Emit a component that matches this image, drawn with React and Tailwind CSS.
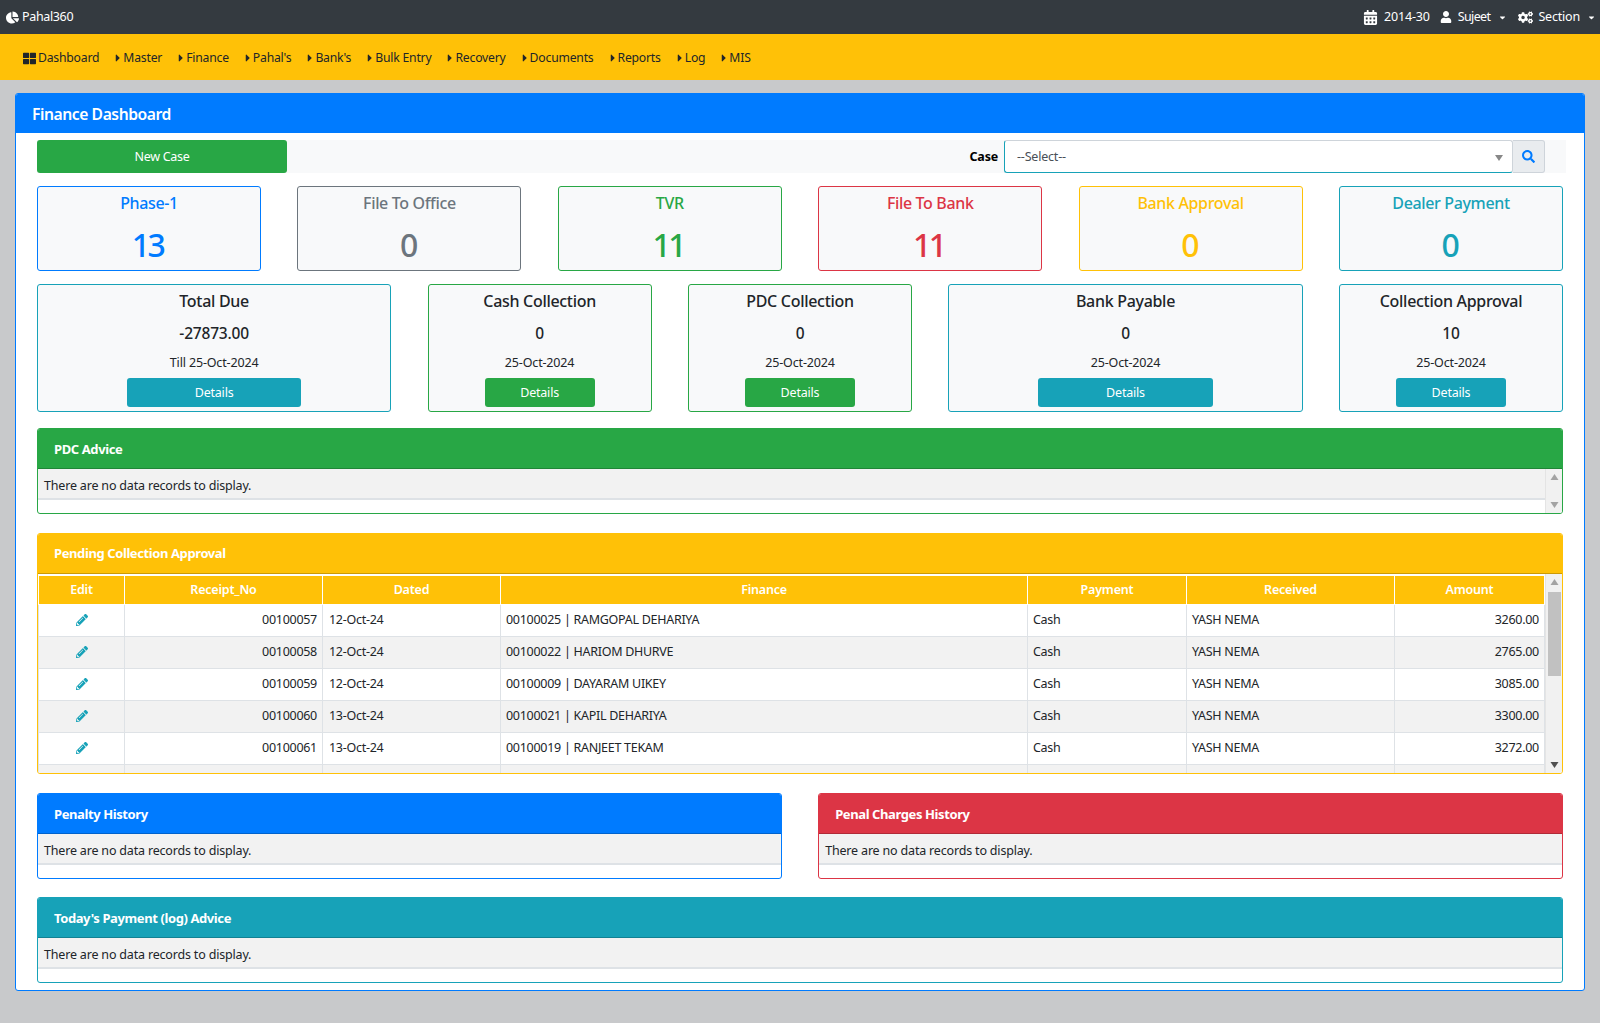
import React from "react";
import {
  FaCalendarAlt,
  FaCaretDown,
  FaCaretRight,
  FaChartPie,
  FaCogs,
  FaPencilAlt,
  FaSearch,
  FaThLarge,
  FaUser,
} from "react-icons/fa";

const menu = ["Master", "Finance", "Pahal's", "Bank's", "Bulk Entry", "Recovery", "Documents", "Reports", "Log", "MIS"];

const rows = [
  ["00100057", "12-Oct-24", "00100025 | RAMGOPAL DEHARIYA", "3260.00"],
  ["00100058", "12-Oct-24", "00100022 | HARIOM DHURVE", "2765.00"],
  ["00100059", "12-Oct-24", "00100009 | DAYARAM UIKEY", "3085.00"],
  ["00100060", "13-Oct-24", "00100021 | KAPIL DEHARIYA", "3300.00"],
  ["00100061", "13-Oct-24", "00100019 | RANJEET TEKAM", "3272.00"],
];

const Tile = ({ title, value, border, text }) => (
  <div className={`h-[85px] rounded-[3px] border bg-[#f8f9fa] text-center ${border} ${text}`}>
    <div className="mt-[5px] text-[16px] leading-[22px] font-medium tracking-[-0.35px]">{title}</div>
    <div className="mt-[11px] pr-[3px] text-[32px] leading-[40px] font-medium tracking-[-2.5px]">{value}</div>
  </div>
);

const Stat = ({ title, value, date, span, border, button }) => (
  <div className={`h-[128px] rounded-[3px] border bg-[#f8f9fa] text-center text-[#212529] ${span} ${border}`}>
    <div className="mt-[5px] text-[16px] leading-[22px] font-medium tracking-[-0.3px]">{title}</div>
    <div className="mt-[10px] text-[15.5px] leading-[22px] font-medium tracking-[-0.2px]">{value}</div>
    <div className="mt-[10px] text-[12.5px] leading-[18px] tracking-[-0.15px]">{date}</div>
    <button className={`mx-auto mt-[6px] block h-[29px] w-[49.5%] rounded-[3px] pt-[1px] text-[12.5px] tracking-[-0.2px] text-white ${button}`}>Details</button>
  </div>
);

const Arrow = ({ up, dark }) => (
  <svg width="17" height="18" viewBox="0 0 17 18" className="shrink-0">
    <polygon points={up ? "8.5,5 12.5,11 4.5,11" : "4.5,7 12.5,7 8.5,13"} fill={dark ? "#505050" : "#a3a3a3"} />
  </svg>
);

const EmptyCard = ({ title, header, border, scroll, className = "" }) => (
  <div className={`overflow-hidden rounded-[3px] border ${border} ${className}`}>
    <div className={`flex h-[40px] items-center border-b border-black/20 pl-[16px] pt-[2px] text-[13px] font-bold tracking-[-0.4px] text-white ${header}`}>{title}</div>
    <div className="flex h-[44px]">
      <div className="flex-1">
        <div className="flex h-[31px] items-center border-b-2 border-[#dee2e6] bg-[#f2f2f2] pl-[6px] pt-[6px] text-[12.5px] tracking-[-0.18px] text-[#212529]">
          There are no data records to display.
        </div>
      </div>
      {scroll && (
        <div className="flex w-[17px] flex-col justify-between border-l border-[#e4e4e4] bg-[#f1f1f1]">
          <Arrow up />
          <Arrow />
        </div>
      )}
    </div>
  </div>
);

const App = () => {
  return (
    <div className="min-h-[1023px] bg-[#c8c9cb] font-['Noto_Sans',sans-serif] text-[12.5px] tracking-[-0.2px] text-[#212529]">
      <div className="flex h-[34px] items-center justify-between bg-[#343a40] pl-[6px] pr-[4px] text-white">
        <div className="flex items-center gap-[3px]">
          <FaChartPie className="text-[13px]" />
          <span className="tracking-[-0.35px]">Pahal360</span>
        </div>
        <div className="flex items-center">
          <FaCalendarAlt className="text-[15px]" />
          <span className="ml-[6px]">2014-30</span>
          <FaUser className="ml-[10px] text-[12px]" />
          <span className="ml-[6px] tracking-[-0.6px]">Sujeet</span>
          <FaCaretDown className="ml-[8px] text-[9px]" />
          <FaCogs className="ml-[11px] text-[15px]" />
          <span className="ml-[5px]">Section</span>
          <FaCaretDown className="ml-[7px] text-[9px]" />
        </div>
      </div>

      <div className="flex h-[46px] items-center bg-[#ffc107] pl-[23px] pt-[2px] text-[12.2px] tracking-[-0.2px]">
        <FaThLarge className="text-[13px]" />
        <span className="ml-[2px]">Dashboard</span>
        {menu.map((item) => (
          <div key={item} className="ml-[16px] flex items-center">
            <FaCaretRight className="h-[12px] w-[6px]" />
            <span className="ml-[2px]">{item}</span>
          </div>
        ))}
      </div>

      <div className="px-[15px] pt-[13px]">
        <div className="h-[898px] overflow-hidden rounded-[3px] border border-[#007bff] bg-white">
          <div className="flex h-[39px] items-center bg-[#007bff] pl-[16px] pt-[2px] text-[15.7px] font-semibold tracking-[-0.45px] text-white">
            Finance Dashboard
          </div>

          <div className="pl-[21px] pr-[21px] pt-[7px]">
            <div className="-mr-[3px] flex h-[33px] items-center bg-[#f8f9fa]">
              <button className="h-[33px] w-[250px] rounded-[3px] bg-[#28a745] pt-[1px] text-[12.5px] tracking-[-0.3px] text-white">New Case</button>
              <div className="flex-1" />
              <span className="mr-[6px] pt-[1px] text-[12.5px] font-bold text-black">Case</span>
              <div className="flex h-[33px] w-[509px] items-center justify-between rounded-[3px] border border-[#ced4da] border-b-[#17a2b8] border-l-[#17a2b8] bg-white pl-[12px] pr-[9px] text-[#495057]">
                <span className="pt-[1px]">--Select--</span>
                <svg width="8" height="6" viewBox="0 0 8 6" className="mt-[3px]">
                  <polygon points="0,0 8,0 4,6" fill="#888888" />
                </svg>
              </div>
              <div className="mr-[21px] flex h-[33px] w-[32px] items-center justify-center rounded-r-[3px] border border-l-0 border-[#ced4da] bg-[#e9ecef] text-[13px] text-[#007bff]">
                <FaSearch />
              </div>
            </div>

            <div className="mt-[13px] grid grid-cols-6 gap-x-[36.4px]">
              <Tile title="Phase-1" value="13" border="border-[#007bff]" text="text-[#007bff]" />
              <Tile title="File To Office" value="0" border="border-[#6c757d]" text="text-[#6c757d]" />
              <Tile title="TVR" value="11" border="border-[#28a745]" text="text-[#28a745]" />
              <Tile title="File To Bank" value="11" border="border-[#dc3545]" text="text-[#dc3545]" />
              <Tile title="Bank Approval" value="0" border="border-[#ffc107]" text="text-[#ffc107]" />
              <Tile title="Dealer Payment" value="0" border="border-[#17a2b8]" text="text-[#17a2b8]" />
            </div>

            <div className="mt-[13px] grid grid-cols-12 gap-x-[36.4px]">
              <Stat title="Total Due" value="-27873.00" date="Till 25-Oct-2024" span="col-span-3" border="border-[#17a2b8]" button="bg-[#17a2b8]" />
              <Stat title="Cash Collection" value="0" date="25-Oct-2024" span="col-span-2" border="border-[#28a745]" button="bg-[#28a745]" />
              <Stat title="PDC Collection" value="0" date="25-Oct-2024" span="col-span-2" border="border-[#28a745]" button="bg-[#28a745]" />
              <Stat title="Bank Payable" value="0" date="25-Oct-2024" span="col-span-3" border="border-[#17a2b8]" button="bg-[#17a2b8]" />
              <Stat title="Collection Approval" value="10" date="25-Oct-2024" span="col-span-2" border="border-[#17a2b8]" button="bg-[#17a2b8]" />
            </div>

            <EmptyCard className="mt-[16px]" title="PDC Advice" header="bg-[#28a745]" border="border-[#28a745]" scroll />

            <div className="mt-[19px] overflow-hidden rounded-[3px] border border-[#ffc107]">
              <div className="flex h-[40px] items-center border-b border-black/20 bg-[#ffc107] pl-[16px] text-[13px] font-bold tracking-[-0.4px] text-white">
                Pending Collection Approval
              </div>
              <div className="flex h-[199px]">
                <div className="flex-1 overflow-hidden">
                  <table className="w-full table-fixed border-collapse text-[12.5px] tracking-[-0.28px]">
                    <colgroup>
                      <col className="w-[86px]" />
                      <col className="w-[198px]" />
                      <col className="w-[178px]" />
                      <col className="w-[527px]" />
                      <col className="w-[159px]" />
                      <col className="w-[208px]" />
                      <col />
                    </colgroup>
                    <thead>
                      <tr className="h-[29px] bg-[#ffc107] text-white">
                        {["Edit", "Receipt_No", "Dated", "Finance", "Payment", "Received", "Amount"].map((h) => (
                          <th key={h} className="border border-t-2 border-white p-0 pt-[1px] text-center font-semibold tracking-[-0.2px]">{h}</th>
                        ))}
                      </tr>
                    </thead>
                    <tbody>
                      {rows.map((r, i) => (
                        <tr key={r[0]} className={`h-[32px] ${i % 2 ? "bg-[#f2f2f2]" : "bg-white"}`}>
                          <td className="border border-[#dee2e6] p-0">
                            <FaPencilAlt className="mx-auto text-[12px] text-[#17a2b8]" />
                          </td>
                          <td className="border border-[#dee2e6] px-[5px] text-right">{r[0]}</td>
                          <td className="border border-[#dee2e6] px-[6px]">{r[1]}</td>
                          <td className="border border-[#dee2e6] px-[5px]">{r[2]}</td>
                          <td className="border border-[#dee2e6] px-[5px]">Cash</td>
                          <td className="border border-[#dee2e6] px-[5px]">YASH NEMA</td>
                          <td className="border border-[#dee2e6] px-[5px] text-right">{r[3]}</td>
                        </tr>
                      ))}
                      <tr className="h-[32px] bg-[#f2f2f2]">
                        {[0, 1, 2, 3, 4, 5, 6].map((c) => (
                          <td key={c} className="border border-[#dee2e6]" />
                        ))}
                      </tr>
                    </tbody>
                  </table>
                </div>
                <div className="flex w-[17px] flex-col border-l border-[#e4e4e4] bg-[#f1f1f1]">
                  <Arrow up />
                  <div className="mx-auto h-[84px] w-[13px] bg-[#c1c1c1]" />
                  <div className="flex-1" />
                  <Arrow dark />
                </div>
              </div>
            </div>

            <div className="mt-[19px] grid grid-cols-2 gap-x-[36.4px]">
              <EmptyCard title="Penalty History" header="bg-[#007bff]" border="border-[#007bff]" />
              <EmptyCard title="Penal Charges History" header="bg-[#dc3545]" border="border-[#dc3545]" />
            </div>

            <EmptyCard className="mt-[18px]" title="Today's Payment (log) Advice" header="bg-[#17a2b8]" border="border-[#17a2b8]" />
          </div>
        </div>
      </div>
    </div>
  );
};

export default App;
